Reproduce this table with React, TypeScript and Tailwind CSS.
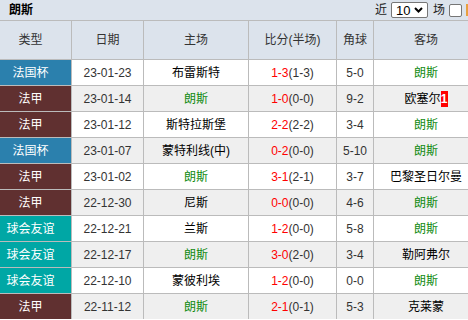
import React from "react";

type Row = {
  type: "cup" | "league" | "friendly";
  label: string;
  date: string;
  home: string;
  homeLens?: boolean;
  ft: string;
  ht: string;
  corner: string;
  away: string;
  awayLens?: boolean;
  badge?: string;
};

const rows: Row[] = [
  { type: "cup", label: "法国杯", date: "23-01-23", home: "布雷斯特", ft: "1-3", ht: "(1-3)", corner: "5-0", away: "朗斯", awayLens: true },
  { type: "league", label: "法甲", date: "23-01-14", home: "朗斯", homeLens: true, ft: "1-0", ht: "(0-0)", corner: "9-2", away: "欧塞尔", badge: "1" },
  { type: "league", label: "法甲", date: "23-01-12", home: "斯特拉斯堡", ft: "2-2", ht: "(2-2)", corner: "3-4", away: "朗斯", awayLens: true },
  { type: "cup", label: "法国杯", date: "23-01-07", home: "蒙特利线(中)", ft: "0-2", ht: "(0-0)", corner: "5-10", away: "朗斯", awayLens: true },
  { type: "league", label: "法甲", date: "23-01-02", home: "朗斯", homeLens: true, ft: "3-1", ht: "(2-1)", corner: "3-7", away: "巴黎圣日尔曼" },
  { type: "league", label: "法甲", date: "22-12-30", home: "尼斯", ft: "0-0", ht: "(0-0)", corner: "4-6", away: "朗斯", awayLens: true },
  { type: "friendly", label: "球会友谊", date: "22-12-21", home: "兰斯", ft: "1-2", ht: "(0-0)", corner: "5-8", away: "朗斯", awayLens: true },
  { type: "friendly", label: "球会友谊", date: "22-12-17", home: "朗斯", homeLens: true, ft: "3-0", ht: "(2-0)", corner: "3-4", away: "勒阿弗尔" },
  { type: "friendly", label: "球会友谊", date: "22-12-10", home: "蒙彼利埃", ft: "1-2", ht: "(0-0)", corner: "0-0", away: "朗斯", awayLens: true },
  { type: "league", label: "法甲", date: "22-11-12", home: "朗斯", homeLens: true, ft: "2-1", ht: "(0-1)", corner: "5-3", away: "克莱蒙" },
];

const typeBg: Record<Row["type"], string> = {
  cup: "bg-[#2b80ad]",
  league: "bg-[#603030]",
  friendly: "bg-[#00a7a5]",
};

const font = { fontFamily: '"Liberation Sans", "Noto Sans CJK SC", sans-serif' };

export default function App() {
  return (
    <div className="w-[468px] h-[320px] overflow-hidden bg-white" style={font}>
      <div className="w-[479px]">
        <div className="h-[21px] bg-[#dce3ec] flex items-center border-b border-[#bbbbbb] text-[12px] text-[#222]">
          <span className="w-[375px] shrink-0 pl-[9px] font-bold text-black">朗斯</span>
          <span>近</span>
          <div className="ml-[4px] w-[37px] h-[16px] bg-white border border-[#767676] rounded-[2px] flex items-center justify-between pl-[4px] pr-[4px] text-[13px] text-black leading-none">
            <span>10</span>
            <svg width="9" height="6" viewBox="0 0 9 6">
              <path d="M1 1 L4.5 4.5 L8 1" fill="none" stroke="#000" strokeWidth="2" />
            </svg>
          </div>
          <span className="ml-[5px]">场</span>
          <div className="ml-[4px] w-[13px] h-[13px] bg-white border border-[#767676] rounded-[2px]" />
          <div className="ml-[4px] w-[6px] h-[12px] bg-[#e8a040]" />
        </div>
        <div className="grid grid-cols-[71px_71px_104px_87px_36px_104px] gap-px bg-[#bbbbbb] text-[12px]">
          {["类型", "日期", "主场", "比分(半场)", "角球", "客场"].map((h, i) => (
            <div
              key={h}
              className={`h-[38px] bg-[#dce3ec] text-[#333] flex items-center justify-center ${i === 0 ? "pr-[10px]" : ""}`}
            >
              {h}
            </div>
          ))}
          {rows.map((r, idx) => {
            const bg = idx % 2 === 0 ? "bg-white" : "bg-[#efefef]";
            return (
              <React.Fragment key={idx}>
                <div className={`h-[25px] ${typeBg[r.type]} text-white flex items-center justify-center pr-[10px]`}>
                  {r.label}
                </div>
                <div className={`h-[25px] ${bg} text-[#333] flex items-center justify-center`}>{r.date}</div>
                <div className={`h-[25px] ${bg} flex items-center justify-center ${r.homeLens ? "text-[#108a10]" : "text-black"}`}>
                  {r.home}
                </div>
                <div className={`h-[25px] ${bg} flex items-center justify-center`}>
                  <span className="text-[#ff0000]">{r.ft}</span>
                  <span className="text-[#333]">{r.ht}</span>
                </div>
                <div className={`h-[25px] ${bg} text-[#333] flex items-center justify-center`}>{r.corner}</div>
                <div className={`h-[25px] ${bg} flex items-center justify-center ${r.awayLens ? "text-[#108a10]" : "text-black"}`}>
                  <span>{r.away}</span>
                  {r.badge && (
                    <span className="bg-[#ff0000] text-white font-bold leading-[16px] h-[16px] w-[7px] flex items-center justify-center">
                      {r.badge}
                    </span>
                  )}
                </div>
              </React.Fragment>
            );
          })}
        </div>
      </div>
    </div>
  );
}
